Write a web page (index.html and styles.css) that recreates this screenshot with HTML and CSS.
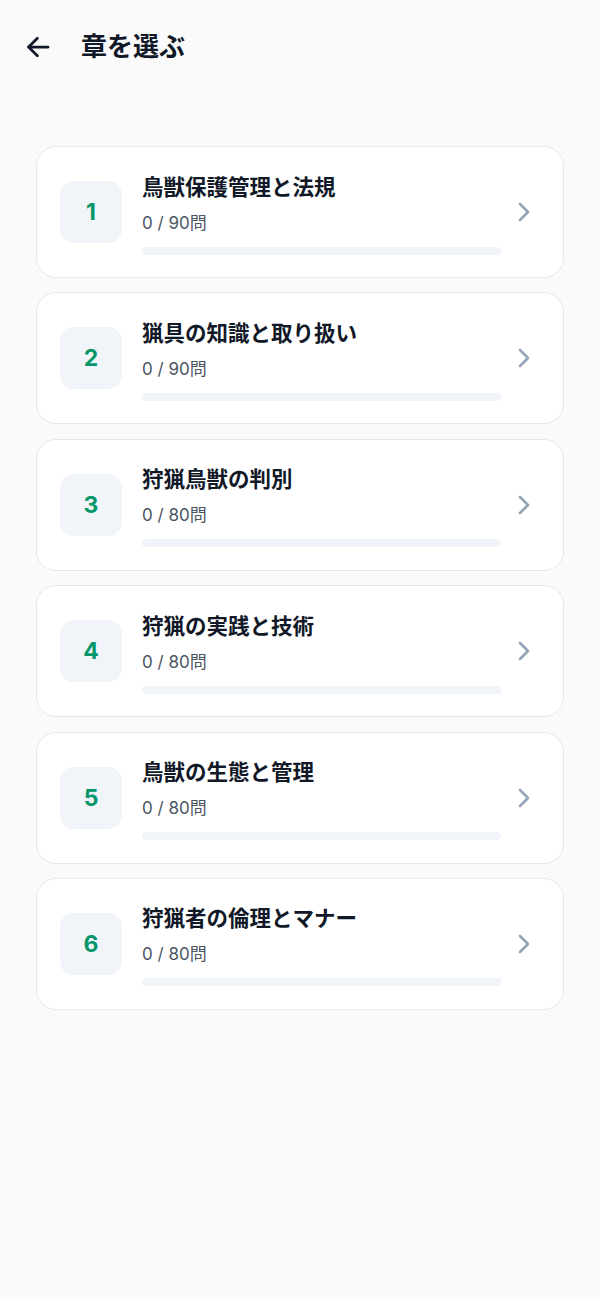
FILE: index.html
```html
<!DOCTYPE html>
<html lang="ja">
<head>
  <meta charset="UTF-8" />
  <meta name="viewport" content="width=device-width, initial-scale=1" />
  <title>章を選ぶ</title>
  <link rel="stylesheet" href="styles.css">
</head>
<body>

  <header class="top-bar">
    <button class="back-btn" aria-label="戻る">
      <svg width="30" height="30" viewBox="0 0 24 24" fill="none" stroke="currentColor" stroke-width="2.2" stroke-linecap="round" stroke-linejoin="round">
        <path d="M20 12H4.5"/>
        <path d="M11.5 19l-7-7 7-7"/>
      </svg>
    </button>
    <h1>章を選ぶ</h1>
  </header>

  <main class="chapter-list">
    <div class="chapter-card">
      <div class="chapter-num">1</div>
      <div class="chapter-info">
        <h3>鳥獣保護管理と法規</h3>
        <p>0 / 90問</p>
        <div class="progress"><div class="progress-fill" style="width: 0%"></div></div>
      </div>
      <span class="chevron"><svg width="18" height="24" viewBox="0 0 18 24" fill="none" stroke="currentColor" stroke-width="2.6" stroke-linecap="round" stroke-linejoin="round"><path d="M5 4l8 8-8 8"/></svg></span>
    </div>

    <div class="chapter-card">
      <div class="chapter-num">2</div>
      <div class="chapter-info">
        <h3>猟具の知識と取り扱い</h3>
        <p>0 / 90問</p>
        <div class="progress"><div class="progress-fill" style="width: 0%"></div></div>
      </div>
      <span class="chevron"><svg width="18" height="24" viewBox="0 0 18 24" fill="none" stroke="currentColor" stroke-width="2.6" stroke-linecap="round" stroke-linejoin="round"><path d="M5 4l8 8-8 8"/></svg></span>
    </div>

    <div class="chapter-card">
      <div class="chapter-num">3</div>
      <div class="chapter-info">
        <h3>狩猟鳥獣の判別</h3>
        <p>0 / 80問</p>
        <div class="progress"><div class="progress-fill" style="width: 0%"></div></div>
      </div>
      <span class="chevron"><svg width="18" height="24" viewBox="0 0 18 24" fill="none" stroke="currentColor" stroke-width="2.6" stroke-linecap="round" stroke-linejoin="round"><path d="M5 4l8 8-8 8"/></svg></span>
    </div>

    <div class="chapter-card">
      <div class="chapter-num">4</div>
      <div class="chapter-info">
        <h3>狩猟の実践と技術</h3>
        <p>0 / 80問</p>
        <div class="progress"><div class="progress-fill" style="width: 0%"></div></div>
      </div>
      <span class="chevron"><svg width="18" height="24" viewBox="0 0 18 24" fill="none" stroke="currentColor" stroke-width="2.6" stroke-linecap="round" stroke-linejoin="round"><path d="M5 4l8 8-8 8"/></svg></span>
    </div>

    <div class="chapter-card">
      <div class="chapter-num">5</div>
      <div class="chapter-info">
        <h3>鳥獣の生態と管理</h3>
        <p>0 / 80問</p>
        <div class="progress"><div class="progress-fill" style="width: 0%"></div></div>
      </div>
      <span class="chevron"><svg width="18" height="24" viewBox="0 0 18 24" fill="none" stroke="currentColor" stroke-width="2.6" stroke-linecap="round" stroke-linejoin="round"><path d="M5 4l8 8-8 8"/></svg></span>
    </div>

    <div class="chapter-card">
      <div class="chapter-num">6</div>
      <div class="chapter-info">
        <h3>狩猟者の倫理とマナー</h3>
        <p>0 / 80問</p>
        <div class="progress"><div class="progress-fill" style="width: 0%"></div></div>
      </div>
      <span class="chevron"><svg width="18" height="24" viewBox="0 0 18 24" fill="none" stroke="currentColor" stroke-width="2.6" stroke-linecap="round" stroke-linejoin="round"><path d="M5 4l8 8-8 8"/></svg></span>
    </div>
  </main>

</body>
</html>
```

FILE: styles.css
```css
* {
  box-sizing: border-box;
  margin: 0;
  padding: 0;
}

body {
  font-family: 'Inter', 'Noto Sans CJK JP', sans-serif;
  background: #fafafa;
  color: #111827;
  min-height: 100vh;
}

.top-bar {
  display: flex;
  align-items: center;
  gap: 28px;
  height: 94px;
  padding: 0 23px;
}

.back-btn {
  background: none;
  border: none;
  color: #111827;
  display: flex;
  align-items: center;
  cursor: pointer;
}

.top-bar h1 {
  font-size: 26px;
  font-weight: 700;
  line-height: 1;
  color: #111827;
}

.chapter-list {
  display: flex;
  flex-direction: column;
  gap: 14.4px;
  padding: 52px 36px 0;
}

.chapter-card {
  display: flex;
  align-items: center;
  height: 132px;
  background: #fff;
  border: 1px solid #e5e7eb;
  border-radius: 20px;
  padding: 0 30px 0 23px;
  cursor: pointer;
}

.chapter-num {
  flex: none;
  width: 62px;
  height: 62px;
  border-radius: 14px;
  background: #f1f5f9;
  color: #059669;
  font-size: 23px;
  font-weight: 700;
  display: flex;
  align-items: center;
  justify-content: center;
}

.chapter-info {
  flex: 1;
  margin-left: 20px;
  margin-right: 14px;
  padding-top: 2px;
}

.chapter-info h3 {
  font-size: 21.5px;
  font-weight: 700;
  line-height: 30px;
  color: #111827;
}

.chapter-info p {
  margin-top: 10px;
  font-size: 17px;
  line-height: 23px;
  color: #4b5563;
}

.progress {
  margin-top: 12px;
  height: 8px;
  border-radius: 4px;
  background: #f1f5f9;
  overflow: hidden;
}

.progress-fill {
  height: 100%;
  background: #059669;
}

.chevron {
  flex: none;
  color: #94a3b8;
  display: flex;
}
```
